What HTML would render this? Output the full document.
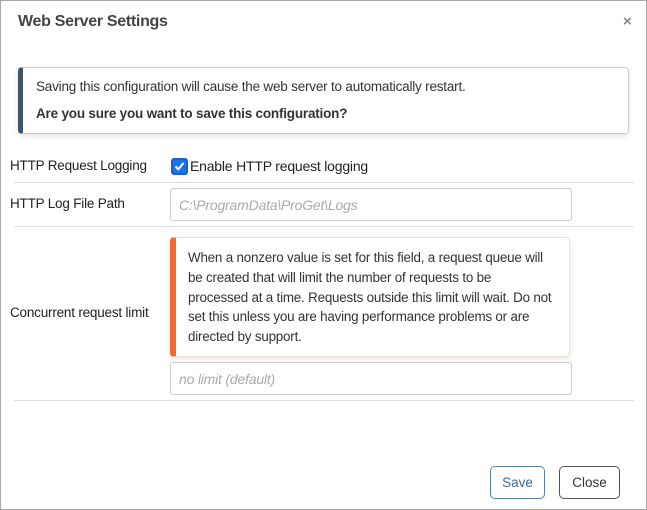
<!DOCTYPE html>
<html><head><style>
*{box-sizing:border-box;margin:0;padding:0}
body{width:647px;height:510px;background:#fff;font-family:"Liberation Sans",sans-serif;color:#333;position:relative;overflow:hidden}
.frame{position:absolute;left:0;top:0;width:647px;height:510px;border:1px solid #a8a8a8}
.a{position:absolute}
.t{font-size:13.5px;letter-spacing:-0.2px;white-space:nowrap}
.line{position:absolute;left:14px;width:620px;height:1px;background:#ddd}
.inp{position:absolute;left:170px;width:402px;height:33px;border:1px solid #ccc;border-radius:3px;font-style:italic;color:#aaa;font-size:14px;padding:8px 8px;letter-spacing:-0.2px}
.btn{position:absolute;top:466px;height:33px;border-radius:5px;font-size:13.5px;text-align:center;line-height:31px;background:#fff}
</style></head><body>
<div class="frame"></div>
<div class="a" style="left:18px;top:13px;font-size:16px;font-weight:bold;color:#444;letter-spacing:-0.3px">Web Server Settings</div>
<div class="a" style="left:623px;top:13px;font-size:15px;font-weight:bold;color:#888">×</div>

<div class="a" style="left:18px;top:67px;width:611px;height:67px;border:1px solid #ccc;border-left:5px solid #3d5468;border-radius:4px;box-shadow:0 2px 6px rgba(0,0,0,.12)"></div>
<div class="a t" style="left:36px;top:79px;color:#333">Saving this configuration will cause the web server to automatically restart.</div>
<div class="a t" style="left:36px;top:106px;font-weight:bold;color:#333">Are you sure you want to save this configuration?</div>

<div class="a t" style="left:10px;top:158px;color:#222">HTTP Request Logging</div>
<div class="a" style="left:171px;top:158px;width:17px;height:17px;border:2px solid #1a5fd0;border-radius:3px;background:#1a73e8"><svg width="13" height="13" viewBox="0 0 13 13" style="position:absolute;left:0;top:0"><path d="M2.5 6.5 L5.3 9.3 L10.5 3" stroke="#fff" stroke-width="2" fill="none"/></svg></div>
<div class="a" style="left:190px;top:158px;font-size:14px;letter-spacing:-0.2px;color:#222">Enable HTTP request logging</div>
<div class="line" style="top:182px"></div>

<div class="a t" style="left:10px;top:196px;color:#222">HTTP Log File Path</div>
<div class="inp" style="top:188px">C:\ProgramData\ProGet\Logs</div>
<div class="line" style="top:226px"></div>

<div class="a t" style="left:10px;top:305px;color:#222">Concurrent request limit</div>
<div class="a" style="left:170px;top:237px;width:400px;height:120px;border:1px solid #f5ddd5;border-left:6px solid #f26a30;border-radius:4px;box-shadow:0 2px 6px rgba(0,0,0,.1)"></div>
<div class="a" style="left:188px;top:248px;font-size:13.4px;line-height:19.8px;letter-spacing:-0.2px;color:#333;width:380px;white-space:nowrap">When a nonzero value is set for this field, a request queue will<br>be created that will limit the number of requests to be<br>processed at a time. Requests outside this limit will wait. Do not<br>set this unless you are having performance problems or are<br>directed by support.</div>
<div class="inp" style="top:362px">no limit (default)</div>
<div class="line" style="top:400px"></div>

<div class="btn" style="left:490px;width:55px;border:1px solid #5a7fa0;color:#3d6a96">Save</div>
<div class="btn" style="left:559px;width:61px;border:1px solid #555;color:#333">Close</div>
</body></html>
